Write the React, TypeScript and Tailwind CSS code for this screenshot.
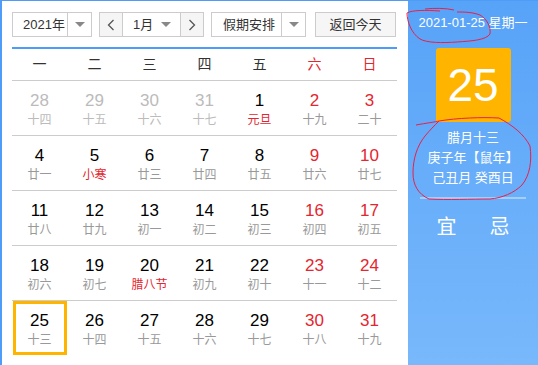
import React from "react";

type Day = { d: number; l: string; other?: boolean; fest?: boolean; today?: boolean };

const WEEK = ["一", "二", "三", "四", "五", "六", "日"];

const ROWS: Day[][] = [
  [
    { d: 28, l: "十四", other: true },
    { d: 29, l: "十五", other: true },
    { d: 30, l: "十六", other: true },
    { d: 31, l: "十七", other: true },
    { d: 1, l: "元旦", fest: true },
    { d: 2, l: "十九" },
    { d: 3, l: "二十" },
  ],
  [
    { d: 4, l: "廿一" },
    { d: 5, l: "小寒", fest: true },
    { d: 6, l: "廿三" },
    { d: 7, l: "廿四" },
    { d: 8, l: "廿五" },
    { d: 9, l: "廿六" },
    { d: 10, l: "廿七" },
  ],
  [
    { d: 11, l: "廿八" },
    { d: 12, l: "廿九" },
    { d: 13, l: "初一" },
    { d: 14, l: "初二" },
    { d: 15, l: "初三" },
    { d: 16, l: "初四" },
    { d: 17, l: "初五" },
  ],
  [
    { d: 18, l: "初六" },
    { d: 19, l: "初七" },
    { d: 20, l: "腊八节", fest: true },
    { d: 21, l: "初九" },
    { d: 22, l: "初十" },
    { d: 23, l: "十一" },
    { d: 24, l: "十二" },
  ],
  [
    { d: 25, l: "十三", today: true },
    { d: 26, l: "十四" },
    { d: 27, l: "十五" },
    { d: 28, l: "十六" },
    { d: 29, l: "十七" },
    { d: 30, l: "十八" },
    { d: 31, l: "十九" },
  ],
];

function Caret() {
  return <span className="h-0 w-0 border-x-[5px] border-t-[5px] border-x-transparent border-t-[#888]" />;
}

function Cell({ day, weekend }: { day: Day; weekend: boolean }) {
  const numColor = day.other ? "text-[#bbbbbb]" : weekend ? "text-[#e3262f]" : "text-black";
  const lunarColor = day.fest ? "text-[#e3262f]" : day.other ? "text-[#bbbbbb]" : "text-[#999999]";
  return (
    <div className="flex h-[54px] items-start justify-center">
      <div
        className={
          "flex h-[54px] w-[54px] flex-col items-center " +
          (day.today ? "border-[3px] border-[#ffb400] pt-[7px]" : "pt-[10px]")
        }
      >
        <span className={"text-[17px] leading-[20px] " + numColor}>{day.d}</span>
        <span className={"mt-[1px] text-[12px] leading-[16px] " + lunarColor}>{day.l}</span>
      </div>
    </div>
  );
}

export default function App() {
  return (
    <div
      className="relative flex h-[365px] w-[538px] overflow-hidden border-l-2 border-t border-[#4e9cf8] bg-white"
      style={{ fontFamily: '"Liberation Sans", "Noto Sans CJK SC", sans-serif' }}
    >
      <div className="flex w-[406px] flex-col pl-[10px] pt-[11px]">
        <div className="flex h-[25px] items-stretch text-[13px] text-[#333]">
          <div className="flex w-[80px] border border-[#cccccc]">
            <span className="flex flex-1 items-center pl-[10px]">2021年</span>
            <span className="flex w-[24px] items-center justify-center border-l border-[#cccccc]">
              <Caret />
            </span>
          </div>
          <div className="ml-[7px] flex w-[105px] border border-[#cccccc]">
            <span className="flex w-[22px] items-center justify-center bg-[#f5f5f5] text-[#555]">
              <svg width="8" height="12" viewBox="0 0 8 12">
                <path d="M6.5 1 1.5 6l5 5" fill="none" stroke="#555" strokeWidth="1.3" />
              </svg>
            </span>
            <span className="flex flex-1 items-center border-x border-[#cccccc] pl-[10px]">
              <span className="flex-1">1月</span>
              <span className="mr-[9px] flex">
                <Caret />
              </span>
            </span>
            <span className="flex w-[22px] items-center justify-center bg-[#f5f5f5]">
              <svg width="8" height="12" viewBox="0 0 8 12">
                <path d="M1.5 1l5 5-5 5" fill="none" stroke="#555" strokeWidth="1.3" />
              </svg>
            </span>
          </div>
          <div className="ml-[7px] flex w-[95px] border border-[#cccccc]">
            <span className="flex flex-1 items-center pl-[11px]">假期安排</span>
            <span className="flex w-[24px] items-center justify-center border-l border-[#cccccc]">
              <Caret />
            </span>
          </div>
          <div className="ml-[9px] flex w-[81px] items-center justify-center border border-[#cccccc] bg-[#f6f6f6]">
            返回今天
          </div>
        </div>

        <div className="mt-[10px] w-[385px] border-t-2 border-[#4e9cf8]">
          <div className="grid h-[32px] grid-cols-7 items-center border-b border-[#cccccc] text-[14px]">
            {WEEK.map((w, i) => (
              <span key={w} className={"text-center " + (i >= 5 ? "text-[#e3262f]" : "text-[#333]")}>
                {w}
              </span>
            ))}
          </div>
          {ROWS.map((row, r) => (
            <div
              key={r}
              className={"grid grid-cols-7 " + (r < ROWS.length - 1 ? "border-b border-[#cccccc]" : "")}
            >
              {row.map((day, i) => (
                <Cell key={i} day={day} weekend={i >= 5} />
              ))}
            </div>
          ))}
        </div>
      </div>

      <div className="flex flex-1 flex-col items-center bg-gradient-to-b from-[#57a3f8] to-[#78b8fb] text-white">
        <div className="mt-[14px] text-[13px] leading-[16px]">2021-01-25 星期一</div>
        <div className="mt-[17px] flex h-[74px] w-[75px] items-center justify-center rounded-[3px] bg-[#ffb400] text-[46px] leading-none">
          25
        </div>
        <div className="mt-[6px] text-[13px] leading-[20px]">腊月十三</div>
        <div className="text-[13px] leading-[20px]">庚子年【鼠年】</div>
        <div className="text-[13px] leading-[20px]">己丑月 癸酉日</div>
        <div className="mt-[9px] h-[2px] w-[106px] bg-[#a6cefc]" />
        <div className="mt-[15px] flex w-[106px] justify-around text-[20px] leading-[26px]">
          <span>宜</span>
          <span>忌</span>
        </div>
      </div>

      <svg className="pointer-events-none absolute left-0 top-0" width="538" height="365" viewBox="0 0 538 365">
        <path
          d="M423 8 C432 7 444 7 452 9 M438 10 C424 9 410 9 405 12 C405 20 409 32 418 38 C425 42 440 42 455 41 C470 40 484 39 488 33 C489 26 485 18 478 14 C470 11 462 11 455 11"
          fill="none"
          stroke="#e8204a"
          strokeWidth="1"
        />
        <path
          d="M414 124 C425 122 433 121 437 120 C455 117 480 116 497 117 C510 124 522 133 528 145 C530 160 528 174 520 184 C512 192 500 197 488 198 C470 198 445 199 427 198 C416 193 411 184 411 172 C411 158 415 145 423 135 C428 129 432 125 437 120"
          fill="none"
          stroke="#e8204a"
          strokeWidth="1"
        />
      </svg>
    </div>
  );
}
